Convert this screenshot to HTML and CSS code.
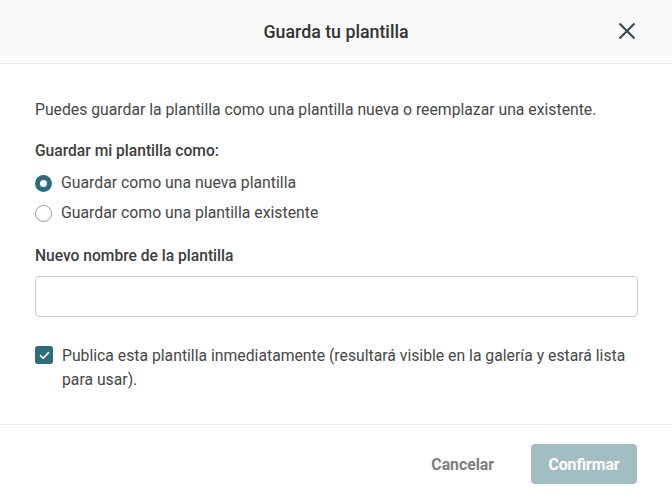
FILE: index.html
```html
<!DOCTYPE html>
<html lang="es">
<head>
<meta charset="utf-8">
<link rel="stylesheet" href="styles.css">
</head>
<body>
<div class="dialog">
  <header class="head">
    <h1 class="title">Guarda tu plantilla</h1>
    <button class="close" aria-label="Cerrar">
      <svg width="18" height="18" viewBox="0 0 18 18"><path d="M1.5 1.5 L16.5 16.5 M16.5 1.5 L1.5 16.5" stroke="#3c4a52" stroke-width="2.2" fill="none"/></svg>
    </button>
  </header>
  <main class="body">
    <p class="intro">Puedes guardar la plantilla como una plantilla nueva o reemplazar una existente.</p>
    <p class="label label-as">Guardar mi plantilla como:</p>
    <div class="radios">
      <label class="radio"><span class="dot on"></span>Guardar como una nueva plantilla</label>
      <label class="radio"><span class="dot"></span>Guardar como una plantilla existente</label>
    </div>
    <p class="label label-name">Nuevo nombre de la plantilla</p>
    <div class="input"></div>
    <label class="check">
      <span class="box"><svg width="11" height="9" viewBox="0 0 11 9"><path d="M1.5 4.6 L4.2 7.2 L9.5 1.6" stroke="#fff" stroke-width="1.6" fill="none" stroke-linecap="round" stroke-linejoin="round"/></svg></span>
      <span class="check-text">Publica esta plantilla inmediatamente (resultará visible en la galería y estará lista para usar).</span>
    </label>
  </main>
  <footer class="foot">
    <button class="btn cancel">Cancelar</button>
    <button class="btn confirm">Confirmar</button>
  </footer>
</div>
</body>
</html>
```
FILE: styles.css
```css
* { box-sizing: border-box; }
html, body { margin: 0; padding: 0; background: #fff; }
body { font-family: Roboto, "Noto Sans", sans-serif; color: #474747; width: 672px; height: 500px; overflow: hidden; }
.dialog { display: flex; flex-direction: column; height: 500px; }
.head {
  height: 64px; background: #fafafa; border-bottom: 1px solid #e9e9e9;
  display: flex; align-items: center; justify-content: center; position: relative;
}
.title { margin: 0; font-size: 17.8px; font-weight: 500; color: #333; }
.close {
  position: absolute; right: 36px; top: 22px; width: 18px; height: 18px;
  padding: 0; border: 0; background: none; display: flex;
}
.body { padding: 0 35px 0 35px; flex: 1; }
.intro { margin: 36px 0 0; font-size: 15.75px; line-height: 20px; color: #474747; }
.label { margin: 0; font-size: 15.6px; font-weight: 500; line-height: 20px; color: #3d3d3d; }
.label-as { margin-top: 21px; }
.radios { display: flex; flex-direction: column; gap: 10px; margin-top: 12px; }
.radio { display: flex; align-items: center; gap: 9px; font-size: 15.8px; line-height: 20px; color: #474747; }
.dot {
  width: 17px; height: 17px; border-radius: 50%; border: 1px solid #9aa0a4; flex: none; background: #fff;
}
.dot.on { border: 5.5px solid #2e6b7b; }
.label-name { margin-top: 23px; }
.input {
  margin-top: 10px; height: 41px; width: 603px; border: 1px solid #c7cbcd; border-radius: 4px; background: #fff;
}
.check { display: flex; align-items: flex-start; gap: 9px; margin-top: 27px; font-size: 15.75px; line-height: 24px; color: #474747; }
.box {
  flex: none; width: 18px; height: 18px; border-radius: 3px; background: #2e6b7b; margin-top: 2px;
  display: flex; align-items: center; justify-content: center;
}
.check-text { width: 585px; }
.foot {
  height: 76px; border-top: 1px solid #ececec; display: flex; align-items: center; justify-content: flex-end;
  padding: 3px 35px 0 0; gap: 37px;
}
.btn { font-family: Roboto, sans-serif; font-size: 15.75px; font-weight: 700; border: 0; border-radius: 4px; cursor: pointer; }
.cancel { background: none; color: #7e7e7e; padding: 0; }
.confirm { background: #a3bec3; color: #fff; height: 40px; width: 106px; padding: 0; }
```
